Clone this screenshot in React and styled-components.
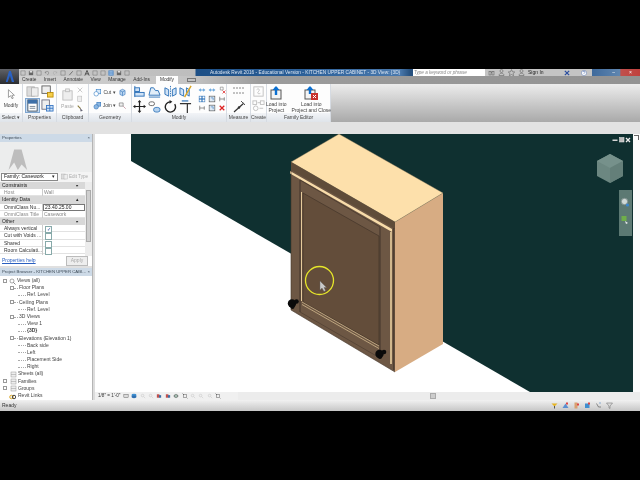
import React from "react";
import styled, { createGlobalStyle } from "styled-components";

const Global = createGlobalStyle`
  html, body { margin: 0; padding: 0; background: #000; }
  body { font-family: "Liberation Sans", Arial, sans-serif; overflow: hidden; }
`;
const Page = styled.div`width:640px;height:480px;background:#000;display:flex;flex-direction:column;padding:69px 0;box-sizing:border-box;`;
const Revit = styled.div`width:640px;height:342px;display:flex;flex-direction:column;font-size:5px;line-height:7.2px;color:#333;background:#e4e4e4;overflow:hidden;filter:blur(.3px);`;

/* title bar */
const TitleBar = styled.div`height:7px;display:flex;align-items:center;background:linear-gradient(90deg,#c9c9c9 0,#bdbdbd 195px,#1d4f86 196px,#2b5f98 300px,#4a79ad 400px,#27517f 410px);position:relative;flex:none;`;
const AppButton = styled.div`position:absolute;left:0;top:0;width:19px;height:15px;background:linear-gradient(#606268,#2a2c30);display:flex;align-items:center;justify-content:center;z-index:2;`;
const Quick = styled.div`width:195px;padding-left:20px;display:flex;align-items:center;gap:2px;box-sizing:border-box;flex:none;height:7px;`;
const AppTitle = styled.div`width:214px;padding-left:15px;color:#dce6f2;font-size:4.8px;white-space:nowrap;box-sizing:border-box;flex:none;`;
const Search = styled.div`width:72px;height:7px;margin-left:4px;background:#fff;color:#888;font-style:italic;font-size:4.6px;line-height:7px;padding-left:1px;box-sizing:border-box;white-space:nowrap;flex:none;`;
const Help = styled.div`width:107px;height:7px;display:flex;align-items:center;gap:3px;padding-left:3px;box-sizing:border-box;background:#c4c4c4;color:#222;flex:none;`;
const WinButtons = styled.div`flex:1;height:7px;display:flex;background:linear-gradient(90deg,#3f6a9c,#5f86b0 58%,#c0504d 60%,#c0403d);align-items:center;justify-content:flex-end;color:#fff;gap:14px;padding-right:8px;`;

/* tabs */
const TabStrip = styled.div`height:8px;display:flex;align-items:stretch;flex:none;background:linear-gradient(90deg,#d2d2d2,#c4c4c4 190px,#9c9c9c 260px,#929292);padding-left:22px;gap:7.6px;`;
const Tab = styled.div`padding:0 ${p=>p.$active?"3.500px":"0"};margin-left:${p=>p.$active?"-1px":"0"};display:flex;align-items:center;background:${p=>p.$active?"#fdfdfd":"transparent"};color:#333;white-space:nowrap;font-size:4.8px;`;
const TabBox = styled.div`width:9px;height:4px;margin:2px 0 0 2px;border:1px solid #777;box-sizing:border-box;`;

/* ribbon */
const RibbonRow = styled.div`height:38px;display:flex;flex:none;background:linear-gradient(#ececec,#a9a9a9);`;
const Panel = styled.div`width:${p=>p.$w}px;flex:none;display:flex;flex-direction:column;background:#fdfdfd;border-right:1px solid #d6dbe2;box-sizing:border-box;`;
const PanelBody = styled.div`flex:1;display:flex;justify-content:${p=>p.$j||"center"};align-items:${p=>p.$a||"center"};gap:${p=>p.$g||1}px;padding:${p=>p.$p||0};min-height:0;`;
const PanelLabel = styled.div`height:9px;text-align:center;line-height:9px;color:#444;background:linear-gradient(#f2f4f7,#dfe4ea);white-space:nowrap;`;
const Stack = styled.div`display:flex;flex-direction:column;align-items:center;gap:${p=>p.$g||0}px;color:${p=>p.$dim?"#aaa":"#444"};text-align:center;line-height:6.4px;white-space:nowrap;`;
const ToolGrid = styled.div`display:grid;grid-template-columns:repeat(${p=>p.$c},${p=>p.$s}px);grid-auto-rows:${p=>p.$r}px;align-items:center;justify-items:center;column-gap:${p=>p.$cg||0}px;`;
const Sel = styled.div`background:#c7dcf3;outline:1px solid #7fa6d0;display:flex;`;
const MiniRow = styled.div`display:flex;align-items:center;gap:1px;color:#444;height:10px;white-space:nowrap;`;
const Band = styled.div`height:12px;flex:none;background:#e2e2e2;`;

/* workspace */
const Workspace = styled.div`height:266px;display:flex;flex:none;background:#e4e4e4;`;
const Side = styled.div`width:92px;flex:none;display:flex;flex-direction:column;background:#fff;border-right:1px solid #b5b5b5;`;
const Gutter = styled.div`width:2px;flex:none;background:#dcdcdc;`;
const PaneTitle = styled.div`height:8px;background:#cddae7;display:flex;justify-content:space-between;padding:0 2px;line-height:8px;color:#3d4a57;font-size:4.3px;white-space:nowrap;flex:none;`;
const Preview = styled.div`height:30px;background:#eceded;display:flex;padding-left:3px;align-items:center;flex:none;position:relative;`;
const TypeRow = styled.div`height:10px;display:flex;align-items:center;gap:3px;padding:0 1px;flex:none;background:#f4f4f4;white-space:nowrap;`;
const Select = styled.div`width:57px;height:8px;border:1px solid #888;background:#fff;display:flex;justify-content:space-between;align-items:center;padding:0 2px;box-sizing:border-box;color:#222;flex:none;`;
const Edit = styled.div`color:#aaa;display:flex;align-items:center;gap:1px;font-size:4.6px;`;
const PropsArea = styled.div`display:flex;height:74px;flex:none;`;
const PropList = styled.div`flex:1;min-width:0;`;
const Section = styled.div`height:7.2px;background:#d8d8d8;color:#222;display:flex;justify-content:space-between;padding:0 6px 0 2px;`;
const PropRow = styled.div`height:7.2px;display:grid;grid-template-columns:43px 1fr;border-bottom:.5px solid #e2e2e2;box-sizing:border-box;color:${p=>p.$dim?"#888":"#333"};white-space:nowrap;`;
const PropName = styled.div`padding-left:4px;overflow:hidden;border-right:.5px solid #ccc;`;
const PropValue = styled.div`padding-left:1px;color:${p=>p.$dim?"#888":"#222"};${p=>p.$box?"border:1px solid #777;line-height:5.4px;box-sizing:border-box;":""}`;
const Check = styled.div`width:5px;height:5px;margin:1px 0 0 1px;border:.5px solid #8aa;background:#fff;color:#2a4fa0;font-size:5px;line-height:5px;text-align:center;`;
const Scroll = styled.div`width:7px;flex:none;background:#ececec;position:relative;`;
const ScrollThumb = styled.div`position:absolute;left:1px;top:8px;width:5px;height:52px;background:#cfcfcf;border:.5px solid #aaa;box-sizing:border-box;`;
const HelpRow = styled.div`height:10px;display:flex;align-items:center;justify-content:space-between;padding:0 4px 0 2px;flex:none;`;
const LinkText = styled.span`color:#2a5fc0;text-decoration:underline;`;
const Apply = styled.div`width:20px;height:8px;border:.5px solid #bbb;background:#eee;color:#aaa;text-align:center;line-height:7.5px;`;
const Divider = styled.div`height:2px;background:#e0e0e0;flex:none;`;
const Tree = styled.div`flex:1;padding-top:1px;overflow:hidden;`;
const TreeRow = styled.div`height:7.2px;display:flex;align-items:center;white-space:nowrap;color:#444;padding-left:${p=>p.$indent}px;font-weight:${p=>p.$bold?700:400};position:relative;`;
const Exp = styled.span`position:absolute;left:${p=>p.$x}px;top:1.6px;width:4px;height:4px;border:.5px solid #999;box-sizing:border-box;background:#fff;`;
const TreeIcon = styled.span`position:absolute;left:${p=>p.$x}px;top:.6px;width:6px;height:6px;display:flex;`;
const Stem = styled.span`position:absolute;left:${p=>p.$x}px;top:3.6px;width:${p=>p.$w}px;border-top:.5px dotted #aaa;`;

const View = styled.div`flex:1;display:flex;flex-direction:column;min-width:0;`;
const CanvasRow = styled.div`height:258px;display:flex;flex:none;`;
const Scene = styled.svg`width:538px;height:258px;display:block;flex:none;`;
const VScroll = styled.div`flex:1;background:#fbfbfb;position:relative;`;
const Resize = styled.div`position:absolute;left:1px;top:1px;width:4px;height:4px;border-top:.5px solid #666;border-right:.5px solid #666;`;
const BottomBar = styled.div`height:8px;display:flex;flex:none;background:#ececec;position:relative;`;
const ViewCtl = styled.div`width:143px;flex:none;display:flex;align-items:center;gap:2.4px;padding-left:3px;box-sizing:border-box;background:#f0f0f0;color:#333;white-space:nowrap;font-size:4.6px;`;
const HThumb = styled.div`position:absolute;left:335px;top:1px;width:6px;height:6px;background:#ccc;border:.5px solid #aaa;box-sizing:border-box;`;
const Status = styled.div`flex:1;display:flex;align-items:center;justify-content:space-between;padding:0 27px 0 2px;background:linear-gradient(#f1f1f1,#c6c6c6);color:#333;`;
const StatusIcons = styled.div`display:flex;gap:4px;`;

const Ic = ({s=12,children,vb=14}) => <svg width={s} height={s} viewBox={`0 0 ${vb} ${vb}`} fill="none" style={{display:"block",flex:"none"}}>{children}</svg>;

const ICONS = {
  arrow:<path d="M4 2v9l2.5-2 1.7 3.5 1.4-.7L8 8.500h3z" stroke="#777" fill="#fff" strokeWidth=".8"/>,
  pageA:<g stroke="#aaa" strokeWidth=".8" fill="#ddd"><rect x="1" y="2" width="8" height="10"/><rect x="6" y="3" width="7" height="9" fill="#eee"/></g>,
  pageB:<g strokeWidth=".9"><rect x="1" y="1" width="9" height="8" stroke="#555" fill="#eee"/><rect x="7" y="8" width="6" height="5" stroke="#b98900" fill="#f6cf4b"/></g>,
  propSel:<g strokeWidth=".9"><rect x="2" y="1" width="10" height="12" stroke="#345" fill="#fff"/><rect x="2" y="1" width="10" height="4" fill="#3d6fa8"/><path d="M4 8h6M4 10h6" stroke="#678"/></g>,
  propB:<g strokeWidth=".9"><rect x="1" y="1" width="8" height="10" stroke="#667" fill="#eee"/><rect x="6" y="7" width="7" height="6" stroke="#2e6fc0" fill="#cfe2f6"/><path d="M9.500 7v6M6 10h7" stroke="#2e6fc0"/></g>,
  paste:<g stroke="#bbb" strokeWidth=".9" fill="#eee"><rect x="2" y="3" width="10" height="10"/><rect x="5" y="1" width="4" height="3"/></g>,
  x:<path d="M3 3l8 8M11 3l-8 8" stroke="#bbb" strokeWidth="1.300"/>,
  copyS:<g stroke="#bbb" fill="#eee"><rect x="3" y="2" width="7" height="9"/></g>,
  brush:<g><path d="M3 3l5 5" stroke="#8a7a3a" strokeWidth="2"/><path d="M7 7l5 5-4 1z" fill="#667"/></g>,
  cut:<g stroke="#2e7bc4" strokeWidth=".9" fill="#d9e9f8"><rect x="5" y="2" width="7" height="7"/><circle cx="5" cy="9" r="3.500" fill="#fff"/></g>,
  join:<g stroke="#2e6fb8" strokeWidth=".9" fill="#8db8e2"><rect x="6" y="2" width="6" height="6"/><circle cx="5" cy="9" r="3.500"/></g>,
  cube:<g stroke="#2e6fb8" strokeWidth=".9" fill="#bcd7f0"><path d="M3 4l4-2 4 2v6l-4 2-4-2z"/><path d="M3 4l4 2 4-2M7 6v6"/></g>,
  paint:<g stroke="#666" strokeWidth=".9" fill="#eee"><path d="M2 3h6v5H2z"/><path d="M8 8l4 4" stroke="#a67"/></g>,
  align:<g stroke="#2e72b8" strokeWidth="1" fill="#cfe2f6"><path d="M2 1v12"/><rect x="2" y="3" width="5" height="4"/><rect x="2" y="8" width="10" height="4"/></g>,
  offset:<g stroke="#2e72b8" strokeWidth="1" fill="#e2eef9"><path d="M1 11h12l-2-5H8L6 3H3z"/><path d="M1 13h12"/></g>,
  mirror:<g stroke="#2e72b8" strokeWidth="1" fill="#cfe2f6"><path d="M7 1v12" strokeDasharray="1.500 1"/><path d="M1 3l4 2v7l-4-2zM13 3l-4 2v7l4-2z"/></g>,
  mirror2:<g stroke="#2e72b8" strokeWidth="1" fill="#cfe2f6"><path d="M1 3l4 2v7l-4-2zM8 3l3 2v7l-3-2z"/><path d="M13 1L6 13" stroke="#d9a520" strokeWidth="1.500"/></g>,
  move:<g stroke="#222" strokeWidth="1.300" fill="#222"><path d="M7 2v10M2 7h10"/><path d="M7 0l2 2.500H5zM7 14l2-2.500H5zM0 7l2.500 2v-4zM14 7l-2.500 2v-4z" stroke="none"/></g>,
  copy:<g strokeWidth=".9"><rect x="1" y="2" width="6" height="4" rx="2" stroke="#555" fill="#fff"/><rect x="6" y="8" width="7" height="5" rx="2.500" stroke="#2e72b8" fill="#b6d2ee"/></g>,
  rotate:<g><path d="M11.500 4.500A5.500 5.500 0 1 1 7 2" stroke="#222" strokeWidth="1.500"/><path d="M6 0v4l3-2z" fill="#222"/></g>,
  trim:<g stroke="#333" strokeWidth="1.300"><path d="M1 4h12M9 4v10"/><path d="M3 1h7" stroke="#2e72b8"/></g>,
  sa:<path d="M1 7l4-3v2h4V4l4 3-4 3V8H5v2z" fill="#6aa6dc"/>,
  sb:<g stroke="#2e72b8" fill="#fff"><rect x="2" y="2" width="4.500" height="4.500"/><rect x="7.500" y="2" width="4.500" height="4.500"/><rect x="2" y="7.500" width="4.500" height="4.500"/><rect x="7.500" y="7.500" width="4.500" height="4.500"/></g>,
  sc:<g stroke="#444"><rect x="2" y="2" width="10" height="10" fill="#dfeaf5"/><path d="M5 5h4v4" stroke="#2e72b8"/></g>,
  sd:<g stroke="#444" strokeWidth="1"><path d="M3 3v8M3 7h8M11 4v6"/></g>,
  redx:<path d="M3 3l8 8M11 3l-8 8" stroke="#d22" strokeWidth="2.200"/>,
  pin:<g><path d="M4 2h5v5H4z" stroke="#777"/><path d="M8 8l5 5M13 8l-5 5" stroke="#d22" strokeWidth="1.300"/></g>,
  line:<g stroke="#888" strokeWidth="1"><path d="M1 4h12M1 9h12" strokeDasharray="2 1"/></g>,
  measure:<g><path d="M2 12L12 3" stroke="#333" strokeWidth="1.200"/><circle cx="7" cy="7.500" r="1.200" fill="#333"/><path d="M9 1l4 4" stroke="#555"/></g>,
  createA:<g stroke="#bbb" strokeWidth=".9"><rect x="2" y="2" width="10" height="10"/><path d="M5 5c2-2 4 0 2 2s0 3 2 2" /></g>,
  createB:<g stroke="#bbb" strokeWidth=".9"><rect x="1" y="2" width="4" height="4"/><path d="M6 4h3"/><rect x="9" y="2" width="4" height="4"/><circle cx="4" cy="10" r="2.500"/><path d="M8 10h4"/></g>,
  load:<g><rect x="2" y="4" width="10" height="9" fill="#f4f4f4" stroke="#555"/><path d="M7 9V1" stroke="#0b6fd0" strokeWidth="2.400"/><path d="M3.500 4L7 0l3.500 4z" fill="#0b6fd0"/></g>,
  loadClose:<g><rect x="1" y="4" width="10" height="9" fill="#f4f4f4" stroke="#555"/><path d="M6 8V1" stroke="#0b6fd0" strokeWidth="2.400"/><path d="M2.500 4L6 0l3.500 4z" fill="#0b6fd0"/><rect x="7" y="7" width="7" height="7" fill="#c8332e"/><path d="M9 9l3 3M12 9l-3 3" stroke="#fff"/></g>,
  q1:<path d="M2 2h10v10H2z" stroke="#666"/>,
  q2:<g><rect x="2" y="2" width="10" height="10" fill="#666"/><rect x="4" y="2" width="6" height="4" fill="#ddd"/></g>,
  undo:<path d="M3 7a4 4 0 1 1 4 4M3 4v3h3" stroke="#777" strokeWidth="1.200"/>,
  redo:<path d="M11 7a4 4 0 1 0-4 4M11 4v3H8" stroke="#aaa" strokeWidth="1.200"/>,
  pen:<path d="M3 12L11 3" stroke="#444" strokeWidth="1.500"/>,
  A:<path d="M2 13L7 1l5 12M4 9h6" stroke="#333" strokeWidth="1.800"/>,
  sel:<g><rect x="1" y="1" width="12" height="12" fill="#4b87c8"/><path d="M3 4h8M3 7h8M3 10h8" stroke="#fff"/></g>,
  bino:<g stroke="#555"><rect x="2" y="5" width="4" height="7"/><rect x="8" y="5" width="4" height="7"/><path d="M6 7h2"/></g>,
  star:<path d="M7 1l2 4.500 4.500.5-3.300 3 1 4.500L7 11l-4.200 2.500 1-4.500L.5 6 5 5.500z" stroke="#555"/>,
  user:<g stroke="#555"><circle cx="7" cy="4" r="3"/><path d="M2 13c0-6 10-6 10 0z"/></g>,
  xa:<path d="M2 2l10 10M12 2L2 12" stroke="#2c4fa0" strokeWidth="3"/>,
  help:<g><circle cx="7" cy="7" r="6" stroke="#3a5fa8" fill="#fff"/><path d="M5 5c0-3 4-3 4 0 0 2-2 1.500-2 4" stroke="#3a5fa8" strokeWidth="1.300"/></g>,
  eye:<g><circle cx="5" cy="8" r="3.500" stroke="#d9a520" strokeWidth="2"/><circle cx="10" cy="8" r="3.500" stroke="#444" strokeWidth="2"/></g>,
  binos:<g><circle cx="6" cy="6" r="4" stroke="#555"/><path d="M9 9l4 4" stroke="#555" strokeWidth="1.400"/></g>,
  plan:<g stroke="#999"><rect x="2" y="2" width="10" height="10" fill="#eee"/><path d="M2 7h10"/></g>,
  vc1:<g stroke="#555" fill="#ddd"><rect x="2" y="3" width="10" height="8"/></g>,
  vc2:<g fill="#3f8fd0"><ellipse cx="7" cy="5" rx="6" ry="3"/><ellipse cx="7" cy="9" rx="6" ry="3" fill="#2f6fb0"/></g>,
  vc3:<g stroke="#bbb"><circle cx="6" cy="6" r="3"/><path d="M9 9l3 3"/></g>,
  vc4:<g fill="#c0504d"><rect x="2" y="3" width="6" height="8"/><rect x="7" y="5" width="5" height="6" fill="#3a6ea5"/></g>,
  vc5:<g stroke="#333"><circle cx="7" cy="7" r="4" fill="#bfe0d0"/><path d="M1 7h12"/></g>,
  vc6:<g stroke="#444"><rect x="3" y="3" width="8" height="8"/><path d="M1 1l3 3M13 13l-3-3"/></g>,
  st1:<g fill="#e6b422"><path d="M1 3h12L7 9z"/><rect x="6" y="8" width="2" height="5" fill="#555"/></g>,
  st2:<g fill="#5a8fd0"><path d="M1 12l6-9 6 9z"/><rect x="8" y="1" width="4" height="4" fill="#d44"/></g>,
  st3:<g fill="#d8a070"><rect x="3" y="1" width="6" height="12"/><rect x="8" y="3" width="4" height="4" fill="#d44"/></g>,
  st4:<g fill="#3f8fd0"><rect x="2" y="3" width="9" height="9"/><rect x="8" y="1" width="4" height="4" fill="#d44"/></g>,
  st5:<g stroke="#333"><path d="M3 3l4 7h5"/><path d="M8 2h4" stroke="#2e72b8"/></g>,
  funnel:<path d="M1 2h12L8 8v5l-2-1V8z" stroke="#666" fill="#ddd"/>,
};
const I = ({n,s}) => <Ic s={s}>{ICONS[n]}</Ic>;

const PROPS = [
  {section:"Constraints",mark:"⌅"},
  {name:"Host",value:"Wall",dim:true},
  {section:"Identity Data",mark:"▴"},
  {name:"OmniClass Nu...",value:"23.40.25.00",box:true},
  {name:"OmniClass Title",value:"Casework",dim:true},
  {section:"Other",mark:"⌅"},
  {name:"Always vertical",check:"✓"},
  {name:"Cut with Voids ...",check:""},
  {name:"Shared",check:""},
  {name:"Room Calculati...",check:""},
];
const TREE = [
  {t:"Views (all)",i:17,exp:3,icon:"binos",ix:9},
  {t:"Floor Plans",i:19,exp:10,sq:true},
  {t:"Ref. Level",i:27,stem:[18,8]},
  {t:"Ceiling Plans",i:19,exp:10,sq:true},
  {t:"Ref. Level",i:27,stem:[18,8]},
  {t:"3D Views",i:19,exp:10,sq:true},
  {t:"View 1",i:27,stem:[18,8]},
  {t:"{3D}",i:27,stem:[18,8],bold:true},
  {t:"Elevations (Elevation 1)",i:19,exp:10,sq:true},
  {t:"Back side",i:27,stem:[18,8]},
  {t:"Left",i:27,stem:[18,8]},
  {t:"Placement Side",i:27,stem:[18,8]},
  {t:"Right",i:27,stem:[18,8]},
  {t:"Sheets (all)",i:18,icon:"plan",ix:10},
  {t:"Families",i:18,exp:3,icon:"plan",ix:10},
  {t:"Groups",i:18,exp:3,icon:"plan",ix:10},
  {t:"Revit Links",i:18,icon:"eye",ix:9},
];

const CabinetScene = () => (
  <Scene viewBox="95 134 538 258" xmlns="http://www.w3.org/2000/svg">
    <rect x="95" y="134" width="538" height="258" fill="#fff"/>
    <path d="M131 134H633V392H530L131 161Z" fill="#0f3030"/>
    <path d="M395 222L443 193V344L395 372Z" fill="#d7ac83"/>
    <path d="M291 162L395 222V372L291 310Z" fill="#6d5744"/>
    <path d="M339 134L443 193L395 222L291 162Z" fill="#fde0ab" stroke="#8a7a5c" strokeWidth=".4"/>
    <path d="M291 162L395 222V229L291 170Z" fill="#5f4c39"/>
    <path d="M290 171L392 229L392 232L290 173.500Z" fill="#f8dcaa"/>
    <path d="M300 180V312M380 227V358" stroke="#43352a" strokeWidth="1"/>
    <path d="M300 180L380 227" stroke="#43352a" strokeWidth=".7"/>
    <path d="M303 193L379 236V345L303 302Z" fill="#634d3a" stroke="#43352a" strokeWidth=".7"/>
    <path d="M301.500 192V301" stroke="#f4d8a6" strokeWidth=".9"/>
    <path d="M302 302L379 346" stroke="#f4d8a6" strokeWidth=".6"/>
    <path d="M302 304.500L379 348.500" stroke="#f4d8a6" strokeWidth=".6"/>
    <path d="M300 312L380 358" stroke="#43352a" strokeWidth=".5"/>
    <path d="M391 232V364" stroke="#f4d8a6" strokeWidth="1.500"/>
    <path d="M393.800 228V370" stroke="#43352a" strokeWidth="1"/>
    <path d="M291 170V310L395 372" stroke="#43352a" strokeWidth=".6" fill="none"/>
    <g fill="#0a0a0a">
      <circle cx="292" cy="303.500" r="4.200"/><circle cx="296.500" cy="301.500" r="2.300"/><circle cx="292.500" cy="307" r="2"/>
      <circle cx="379.500" cy="354" r="4.200"/><circle cx="384" cy="352" r="2.300"/><circle cx="380" cy="357" r="2"/>
    </g>
    <circle cx="319.500" cy="280.500" r="14" stroke="#e6e62a" strokeWidth="1.300" fill="none"/>
    <path d="M320 281V290L322 288L324 291.500L325.500 290.500L324 287.500L326.500 287.500Z" fill="#c9c9c9" stroke="#666" strokeWidth=".4"/>
    <g>
      <rect x="612.500" y="139.500" width="5" height="1.500" fill="#d5d5d5"/>
      <rect x="619.500" y="137.500" width="4.500" height="4.500" fill="#bbb" stroke="#eee" strokeWidth=".5"/>
      <path d="M626 138L630 142M630 138L626 142" stroke="#eee" strokeWidth="1.300"/>
    </g>
    <path d="M610 154L623 161V176L610 183L597 176V161Z" fill="#6c8781"/>
    <path d="M597 161L610 168L623 161L610 154Z" fill="#76918b"/>
    <path d="M610 168V183L623 176V161Z" fill="#647f79"/>
    <rect x="619" y="190" width="13" height="46" fill="#5c7973"/>
    <circle cx="624.500" cy="201.500" r="3.200" fill="#cfd8d6" stroke="#7d8f8c"/>
    <circle cx="627.500" cy="205" r="1.600" fill="#3a86d0"/>
    <rect x="621.500" y="216" width="5" height="5" fill="#6fae4a"/>
    <path d="M625 221l3 2-2 1z" fill="#eee"/>
  </Scene>
);

export default function App() {
  return (
    <Page>
      <Global/>
      <Revit>
        <TitleBar>
          <AppButton>
            <Ic s={13}><path d="M3 13L6.500 1h2L12 13H9.500L7.500 6 5 13z" fill="#2a62c4"/></Ic>
          </AppButton>
          <Quick>
            {["q1","q2","q1","undo","redo","q1","pen","q1","A","q1","q1","sel","q2","q1"].map((n,k)=><I key={k} n={n} s={6}/>)}
          </Quick>
          <AppTitle>Autodesk Revit 2016 - Educational Version -  KITCHEN UPPER CABINET - 3D View: {"{3D}"}</AppTitle>
          <Search>Type a keyword or phrase</Search>
          <Help>
            <I n="bino" s={7}/><I n="user" s={7}/><I n="star" s={7}/><I n="user" s={7}/>
            <span>Sign In</span><span style={{width:14}}/><I n="xa" s={6}/><span style={{width:5}}/><I n="help" s={6}/>
          </Help>
          <WinButtons><span>–</span><span>×</span></WinButtons>
        </TitleBar>
        <TabStrip>
          {["Create","Insert","Annotate","View","Manage","Add-Ins"].map(t=><Tab key={t}>{t}</Tab>)}
          <Tab $active>Modify</Tab>
          <TabBox/>
        </TabStrip>
        <RibbonRow>
          <Panel $w={23}>
            <PanelBody><Stack $g={2}><I n="arrow" s={12}/>Modify</Stack></PanelBody>
            <PanelLabel>Select ▾</PanelLabel>
          </Panel>
          <Panel $w={34}>
            <PanelBody>
              <ToolGrid $c={2} $s={15} $r={14}>
                <I n="pageA" s={13}/><I n="pageB" s={13}/>
                <Sel><I n="propSel" s={13}/></Sel><I n="propB" s={13}/>
              </ToolGrid>
            </PanelBody>
            <PanelLabel>Properties</PanelLabel>
          </Panel>
          <Panel $w={32}>
            <PanelBody $g={2}>
              <Stack $dim $g={2}><I n="paste" s={13}/>Paste</Stack>
              <Stack $g={1}><I n="x" s={8}/><I n="copyS" s={8}/><I n="brush" s={8}/></Stack>
            </PanelBody>
            <PanelLabel>Clipboard</PanelLabel>
          </Panel>
          <Panel $w={43}>
            <PanelBody $g={2}>
              <Stack $g={3}>
                <MiniRow><I n="cut" s={9}/>Cut ▾</MiniRow>
                <MiniRow><I n="join" s={9}/>Join ▾</MiniRow>
              </Stack>
              <Stack $g={3}>
                <MiniRow><I n="cube" s={9}/></MiniRow>
                <MiniRow><I n="paint" s={9}/></MiniRow>
              </Stack>
            </PanelBody>
            <PanelLabel>Geometry</PanelLabel>
          </Panel>
          <Panel $w={95}>
            <PanelBody $g={3}>
              <ToolGrid $c={4} $s={15.500} $r={15}>
                <I n="align" s={13}/><I n="offset" s={13}/><I n="mirror" s={13}/><I n="mirror2" s={13}/>
                <I n="move" s={13}/><I n="copy" s={13}/><I n="rotate" s={13}/><I n="trim" s={13}/>
              </ToolGrid>
              <ToolGrid $c={3} $s={10} $r={9}>
                <I n="sa" s={8}/><I n="sa" s={8}/><I n="pin" s={8}/>
                <I n="sb" s={8}/><I n="sc" s={8}/><I n="sd" s={8}/>
                <I n="sd" s={8}/><I n="sc" s={8}/><I n="redx" s={8}/>
              </ToolGrid>
            </PanelBody>
            <PanelLabel>Modify</PanelLabel>
          </Panel>
          <Panel $w={24}>
            <PanelBody><Stack $g={2}><I n="line" s={14}/><I n="measure" s={14}/></Stack></PanelBody>
            <PanelLabel>Measure</PanelLabel>
          </Panel>
          <Panel $w={16}>
            <PanelBody><Stack $g={1}><I n="createA" s={13}/><I n="createB" s={13}/></Stack></PanelBody>
            <PanelLabel>Create</PanelLabel>
          </Panel>
          <Panel $w={64}>
            <PanelBody $g={5} $a="flex-start" $p="2px 0 0">
              <Stack $g={1}><I n="load" s={14}/><span>Load into<br/>Project</span></Stack>
              <Stack $g={1}><I n="loadClose" s={14}/><span>Load into<br/>Project and Close</span></Stack>
            </PanelBody>
            <PanelLabel>Family Editor</PanelLabel>
          </Panel>
        </RibbonRow>
        <Band/>
        <Workspace>
          <Side>
            <PaneTitle><span>Properties</span><span>×</span></PaneTitle>
            <Preview>
              <Ic s={26}><path d="M3 14L6 3h4l3 11-3-3-2 3-2-4z" fill="#bdbdbd"/></Ic>
            </Preview>
            <TypeRow>
              <Select><span>Family: Casework</span><span>▾</span></Select>
              <Edit><I n="pageA" s={7}/>Edit Type</Edit>
            </TypeRow>
            <PropsArea>
              <PropList>
                {PROPS.map((p,k)=> p.section
                  ? <Section key={k}><span>{p.section}</span><span>{p.mark}</span></Section>
                  : <PropRow key={k} $dim={p.dim}>
                      <PropName>{p.name}</PropName>
                      {p.check!==undefined
                        ? <PropValue><Check>{p.check}</Check></PropValue>
                        : <PropValue $dim={p.dim} $box={p.box}>{p.value}</PropValue>}
                    </PropRow>)}
              </PropList>
              <Scroll><ScrollThumb/></Scroll>
            </PropsArea>
            <HelpRow><LinkText>Properties help</LinkText><Apply>Apply</Apply></HelpRow>
            <Divider/>
            <PaneTitle><span>Project Browser - KITCHEN UPPER CABI...</span><span>×</span></PaneTitle>
            <Tree>
              {TREE.map((r,k)=>(
                <TreeRow key={k} $indent={r.i} $bold={r.bold}>
                  {r.exp!==undefined && <Exp $x={r.exp}/>}
                  {r.stem && <Stem $x={r.stem[0]} $w={r.stem[1]}/>}
                  {r.sq && <Stem $x={14} $w={4}/>}
                  {r.icon && <TreeIcon $x={r.ix}><I n={r.icon} s={7}/></TreeIcon>}
                  {r.t}
                </TreeRow>
              ))}
            </Tree>
          </Side>
          <Gutter/>
          <View>
            <CanvasRow>
              <CabinetScene/>
              <VScroll><Resize/></VScroll>
            </CanvasRow>
            <BottomBar>
              <ViewCtl>
                <span>1/8" = 1'-0"</span>
                {["vc1","vc2","vc3","vc3","vc4","vc4","vc5","vc6","vc3","vc3","vc3","vc6"].map((n,k)=><I key={k} n={n} s={6}/>)}
              </ViewCtl>
              <HThumb/>
            </BottomBar>
          </View>
        </Workspace>
        <Status>
          <span>Ready</span>
          <StatusIcons>
            {["st1","st2","st3","st4","st5","funnel"].map((n,k)=><I key={k} n={n} s={7}/>)}
          </StatusIcons>
        </Status>
      </Revit>
    </Page>
  );
}
